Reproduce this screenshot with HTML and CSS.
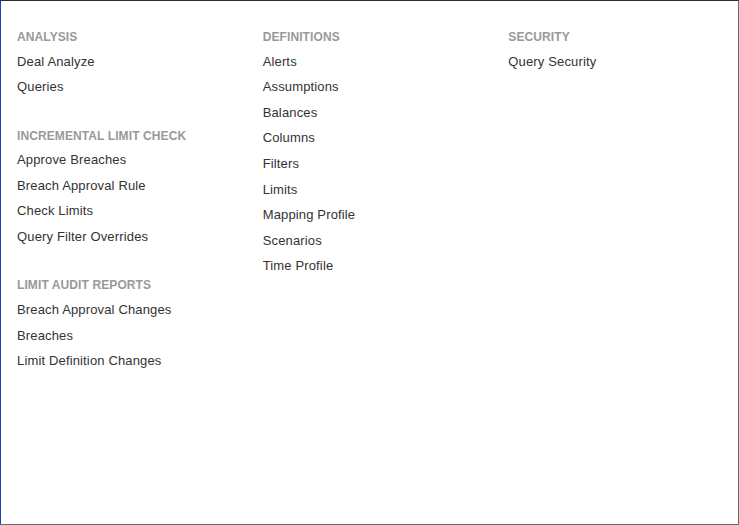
FILE: index.html
```html
<!DOCTYPE html>
<html>
<head>
<meta charset="utf-8">
<link rel="stylesheet" href="styles.css">
</head>
<body>
<div class="panel">
  <div class="col">
    <div class="section">
      <div class="head">Analysis</div>
      <div class="item">Deal Analyze</div>
      <div class="item">Queries</div>
    </div>
    <div class="section">
      <div class="head">Incremental Limit Check</div>
      <div class="item">Approve Breaches</div>
      <div class="item">Breach Approval Rule</div>
      <div class="item">Check Limits</div>
      <div class="item">Query Filter Overrides</div>
    </div>
    <div class="section">
      <div class="head">Limit Audit Reports</div>
      <div class="item">Breach Approval Changes</div>
      <div class="item">Breaches</div>
      <div class="item">Limit Definition Changes</div>
    </div>
  </div>
  <div class="col">
    <div class="section">
      <div class="head">Definitions</div>
      <div class="item">Alerts</div>
      <div class="item">Assumptions</div>
      <div class="item">Balances</div>
      <div class="item">Columns</div>
      <div class="item">Filters</div>
      <div class="item">Limits</div>
      <div class="item">Mapping Profile</div>
      <div class="item">Scenarios</div>
      <div class="item">Time Profile</div>
    </div>
  </div>
  <div class="col">
    <div class="section">
      <div class="head">Security</div>
      <div class="item">Query Security</div>
    </div>
  </div>
</div>
</body>
</html>
```
FILE: styles.css
```css
html, body {
  margin: 0;
  padding: 0;
  background: #fff;
}
.panel {
  box-sizing: border-box;
  width: 739px;
  height: 525px;
  border-top: 1px solid #2b2b2b;
  border-left: 1px solid #1446b8;
  border-right: 1px solid #696969;
  border-bottom: 1px solid #696969;
  display: grid;
  grid-template-columns: 1fr 1fr 1fr;
  align-items: start;
  padding-top: 22px;
  font-family: "Liberation Sans", Arial, sans-serif;
}
.col {
  padding-left: 16px;
  display: flex;
  flex-direction: column;
  gap: 21.8px;
}
.head {
  font-size: 12px;
  font-weight: bold;
  color: #999;
  text-transform: uppercase;
  letter-spacing: 0.1px;
  padding-top: 4px;
  line-height: 21.6px;
}
.item {
  font-size: 13px;
  color: #333;
  letter-spacing: 0.15px;
  line-height: 25.6px;
}
```
